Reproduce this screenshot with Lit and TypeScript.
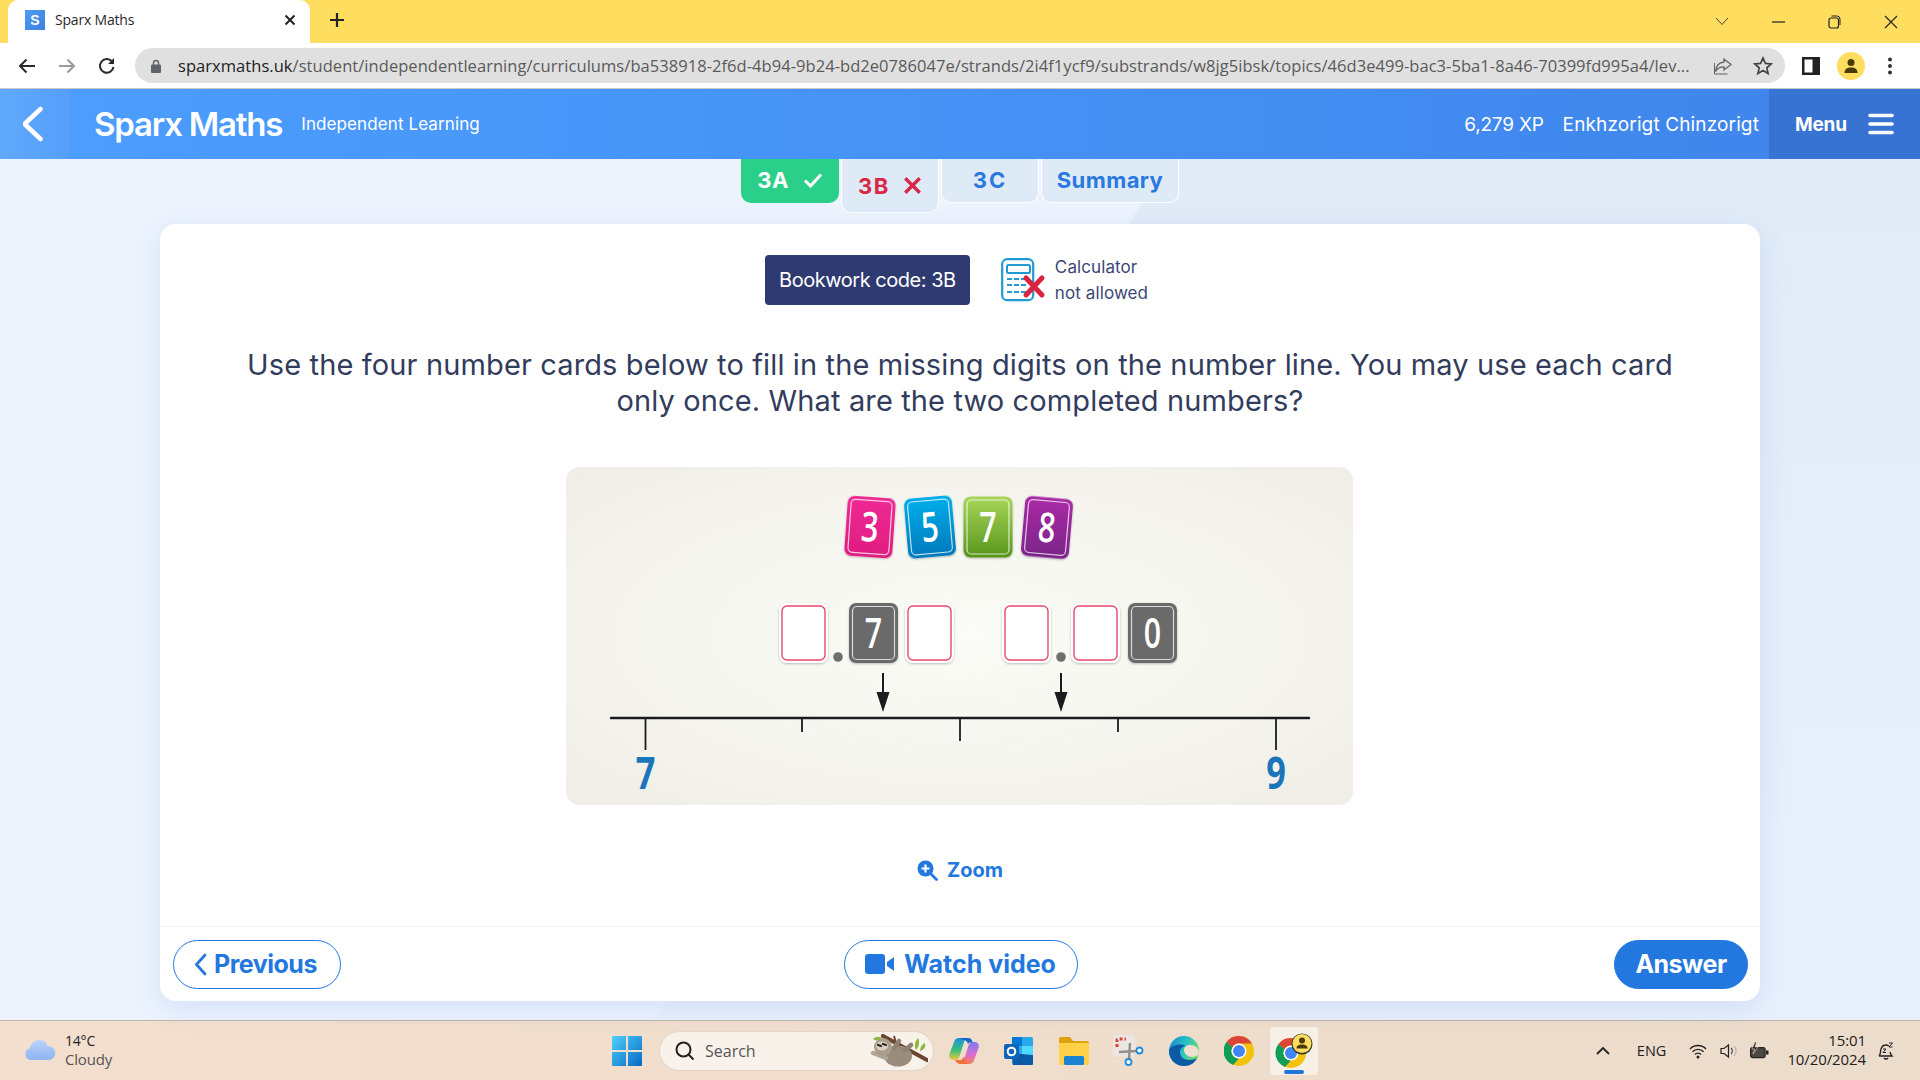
import { LitElement, html, css, svg } from "lit";
import { customElement } from "lit/decorators.js";

const URL_HOST = "sparxmaths.uk";
const URL_PATH = "/student/independentlearning/curriculums/ba538918-2f6d-4b94-9b24-bd2e0786047e/strands/2i4f1ycf9/substrands/w8jg5ibsk/topics/46d3e499-bac3-5ba1-8a46-70399fd995a4/lev...";

function card(cx: number, cy: number, w: number, h: number, rot: number, grad: string, digit: string) {
  const x = cx - w / 2, y = cy - h / 2;
  return svg`<g transform="rotate(${rot} ${cx} ${cy})">
    <rect x=${x} y=${y} width=${w} height=${h} rx="7" fill=${grad} filter="url(#sh)"/>
    <rect x=${x + 3.5} y=${y + 3.5} width=${w - 7} height=${h - 7} rx="4.5" fill="none" stroke="#fff" stroke-opacity=".75" stroke-width="1.2"/>
    <text transform="translate(${cx} ${cy + 14.5}) scale(.74 1)" text-anchor="middle" font-family="'Open Sans',sans-serif" font-weight="600" font-size="41" fill="#fff">${digit}</text>
  </g>`;
}
function blank(x: number) {
  return svg`<rect x=${x} y="603" width="49" height="60" rx="8" fill="#fff" filter="url(#sh)"/>
    <rect x=${x + 3} y="606" width="43" height="54" rx="5" fill="#fff" stroke="#e8486c" stroke-width="1.4"/>`;
}
function arrow(x: number) {
  return svg`<path d="M${x - 1} 673h2v19h5.5L${x} 712l-6.5-20H${x - 1}z" fill="#1c1c1e"/>`;
}
const chromeIcon = svg`<circle cx="15" cy="15" r="15" fill="#f4c20d"/><path d="M15 0a15 15 0 0 1 13 7.500H15a7.500 7.500 0 0 0-6.500 3.750L2.500 6A15 15 0 0 1 15 0z" fill="#db4437"/><path d="M2.500 6l6 5.250A7.500 7.500 0 0 0 15 22.500L9 29A15 15 0 0 1 2.500 6z" fill="#0f9d58"/><circle cx="15" cy="15" r="7.500" fill="#fff"/><circle cx="15" cy="15" r="6" fill="#4285f4"/>`;

@customElement("app-root")
export class AppRoot extends LitElement {
  static styles = css`
    :host { display: flex; flex-direction: column; width: 1920px; height: 1080px; overflow: hidden; font-family: "Noto Sans", sans-serif; background: #ecf3fd; }
    svg { display: block; flex: none; }
    button { font-family: inherit; }
    .tabstrip { height: 43px; background: #ffdd5e; display: flex; align-items: flex-end; padding-left: 8px; flex: none; }
    .ctab { width: 302px; height: 43px; background: #fff; border-radius: 10px 10px 0 0; display: flex; align-items: center; padding: 0 13px 4px 17px; box-sizing: border-box; gap: 10px; color: #2a2a2a; font-size: 14px; font-family: "Open Sans", sans-serif; }
    .favicon { width: 20px; height: 20px; background: linear-gradient(135deg,#4f9cf5,#3d7fe0); color: #fff; font: 700 14px "Liberation Sans", sans-serif; display: flex; align-items: center; justify-content: center; }
    .ctab span.t { flex: 1; letter-spacing: -.2px; }
    .plus { margin: 0 0 4px 19px; align-self: center; }
    .wincontrols { margin-left: auto; display: flex; align-items: center; align-self: center; padding-right: 22px; gap: 43px; }
    .toolbar { height: 45px; background: #fff; display: flex; align-items: center; flex: none; border-bottom: 1px solid #c9c9c9; box-sizing: content-box; }
    .nav { display: flex; align-items: center; gap: 20px; padding-left: 17px; width: 118px; box-sizing: border-box; }
    .omni { width: 1650px; height: 35px; background: #e0e0e0; border-radius: 18px; display: flex; align-items: center; box-sizing: border-box; padding: 0 12px 0 16px; margin-left: 17px; }
    .url { font-family: "Open Sans", sans-serif; font-size: 16.5px; letter-spacing: .05px; color: #5a5a5a; white-space: nowrap; margin-left: 17px; flex: 1; overflow: hidden; }
    .url b { font-weight: 400; color: #222; }
    .omni-icons { display: flex; align-items: center; gap: 20px; margin-left: 8px; }
    .tool-right { display: flex; align-items: center; margin-left: 17px; }
    .avatar { width: 28px; height: 28px; border-radius: 50%; background: #ffdd5e; margin: 0 22px 0 17px; display: flex; align-items: center; justify-content: center; }

    .sparx { height: 70px; flex: none; background: linear-gradient(90deg,#4c9eff,#3f84ea); color: #fff; display: flex; align-items: center; font-family: Inter, sans-serif; }
    .back { width: 70px; height: 70px; background: linear-gradient(90deg,#60a9fd,#559ffb); display: flex; align-items: center; justify-content: center; }
    .logo { margin-left: 24px; font: 600 33px Inter, sans-serif; letter-spacing: -1.2px; white-space: nowrap; }
    .sub { margin-left: 19px; font-size: 17px; letter-spacing: .1px; }
    .xp { margin-left: auto; font-size: 19px; letter-spacing: -.2px; }
    .name { margin-left: 19px; margin-right: 10px; font-size: 19px; letter-spacing: .13px; }
    .menu { width: 151px; height: 70px; background: #3673d3; display: flex; align-items: center; font-size: 19px; font-weight: 700; box-sizing: border-box; padding-left: 26px; gap: 21px; letter-spacing: -.2px; }

    main { flex: 1; position: relative; display: flex; flex-direction: column; align-items: center; min-height: 0; }
    main::before { content: ""; position: absolute; inset: 0; background: linear-gradient(180deg,#e1ebf7,#e8f0fc); clip-path: polygon(1168px 0, 100% 0, 100% 100%, 654px 100%); }
    .tabs { position: relative; height: 65px; display: flex; align-items: flex-start; gap: 2px; flex: none; font-family: Inter, sans-serif; font-weight: 700; font-size: 22px; }
    .tab { height: 44px; box-sizing: border-box; padding-bottom: 2px; background: #dfeaf7; border: 1px solid #fff; border-top: 0; border-radius: 0 0 10px 10px; color: #2a79e0; display: flex; align-items: center; justify-content: center; gap: 14px; letter-spacing: .4px; }
    .t3a { width: 98px; background: #2ad08a; border: 0; color: #fff; }
    .t3b { width: 98px; height: 54px; color: #d92845; padding-bottom: 0; letter-spacing: 1.6px; }
    .t3b svg { width: 19px; height: 19px; margin-left: -1px; }
    .t3c { width: 98px; letter-spacing: 2px; }
    .tsum { width: 138px; }

    .card { position: relative; width: 1600px; height: 777px; flex: none; background: #fff; border-radius: 16px; box-shadow: 0 8px 28px rgba(60,100,210,.12); display: flex; flex-direction: column; font-family: Inter, sans-serif; }
    .body { flex: 1; display: flex; flex-direction: column; align-items: center; padding-top: 31px; }
    .info { display: flex; align-items: center; height: 50px; padding-right: 7px; }
    .bookwork { width: 205px; height: 50px; border-radius: 4px; background: #2f3a70; color: #fff; font-size: 20px; letter-spacing: -.47px; display: flex; align-items: center; justify-content: center; margin-right: 31px; }
    .calc { font-size: 17px; line-height: 26px; color: #3c4775; margin-left: 9px; letter-spacing: .1px; }
    .q { margin: 42px 0 0; text-align: center; font-size: 29px; line-height: 36px; color: #323c5c; letter-spacing: .13px; white-space: nowrap; }
    .panel { width: 787px; height: 338px; margin: 48px 1px 0 0; border-radius: 14px; background: radial-gradient(ellipse at center,#fbfbf7 0%,#f6f6f0 50%,#efede5 100%); overflow: hidden; }
    .zoom { margin-top: 53px; display: flex; align-items: center; gap: 9px; color: #2278de; font-weight: 700; font-size: 20px; }
    .foot { height: 75px; flex: none; box-sizing: border-box; border-top: 1px solid #edf3fb; display: grid; grid-template-columns: 1fr auto 1fr; align-items: center; padding: 0 12px 0 13px; }
    .btn { height: 49px; box-sizing: border-box; border-radius: 25px; border: 1px solid #2278de; color: #2278de; background: #fff; display: flex; align-items: center; justify-content: center; gap: 10px; font-weight: 700; font-size: 25px; }
    .prev { width: 168px; gap: 7px; letter-spacing: -.5px; padding-left: 3px; }
    .watch { width: 234px; }
    .answer { width: 134px; background: #2278de; color: #fff; letter-spacing: -.5px; justify-self: end; }

    .taskbar { height: 60px; flex: none; box-sizing: border-box; border-top: 1px solid #bdb6ad; background: linear-gradient(90deg,#f4dfce,#ecdccb); display: flex; align-items: center; font-family: "Open Sans", sans-serif; color: #222; }
    .weather { width: 612px; flex: none; display: flex; align-items: center; box-sizing: border-box; padding-left: 24px; gap: 9px; font-size: 14px; line-height: 19px; letter-spacing: -.2px; padding-bottom: 1px; }
    .weather small { display: block; font-size: 15px; color: #555; }
    .center { display: flex; align-items: center; }
    .search { width: 273px; height: 38px; box-sizing: border-box; border-radius: 19px; background: #f8f2ea; box-shadow: 0 0 0 1px #e0d6ca; margin-left: 18px; display: flex; align-items: center; padding-left: 15px; gap: 10px; font-size: 16px; color: #555; }
    .search .sloth { margin-left: auto; margin-right: 5px; }
    .apps { display: flex; align-items: center; margin-left: 3px; }
    .app { width: 55px; height: 48px; display: flex; align-items: center; justify-content: center; position: relative; }
    .app.on { background: #f7f0e7; width: 48px; margin-left: 4px; border-radius: 4px; }
    .app.on::after { content: ""; position: absolute; left: 14px; right: 14px; bottom: 1px; height: 4px; border-radius: 2px; background: #1e78d8; }
    .tray { margin-left: auto; display: flex; align-items: center; font-size: 14.5px; }
    .tray .caret { margin-right: 27px; }
    .tray .lang { margin-right: 23px; }
    .tray .wifi { margin-right: 13px; }
    .tray .vol { margin-right: 11px; }
    .tray .bell { margin-right: 25px; }
    .clock { text-align: right; font-size: 15px; line-height: 19px; margin: 0 11px 0 18px; letter-spacing: -.1px; padding-bottom: 1px; }
  `;

  render() {
    return html`
      <div class="tabstrip">
        <div class="ctab">
          <div class="favicon">S</div>
          <span class="t">Sparx Maths</span>
          <svg width="14" height="14" viewBox="0 0 14 14"><path d="M2.5 2.5l9 9M11.5 2.5l-9 9" stroke="#222" stroke-width="2"/></svg>
        </div>
        <svg class="plus" width="16" height="16" viewBox="0 0 16 16"><path d="M8 1v14M1 8h14" stroke="#222" stroke-width="2.2"/></svg>
        <div class="wincontrols">
          <svg width="14" height="9" viewBox="0 0 14 9"><path d="M1 1l6 6.5L13 1" fill="none" stroke="#444" stroke-width="1"/></svg>
          <svg width="13" height="2" viewBox="0 0 13 2"><path d="M0 1h13" stroke="#222" stroke-width="1.2"/></svg>
          <svg width="13" height="14" viewBox="0 0 13 14"><rect x="1" y="3" width="9.5" height="10" rx="2" fill="none" stroke="#222" stroke-width="1.2"/><path d="M3.5 1h5.5a3 3 0 0 1 3 3v6" fill="none" stroke="#222" stroke-width="1"/></svg>
          <svg width="14" height="14" viewBox="0 0 14 14"><path d="M1 1l12 12M13 1L1 13" stroke="#222" stroke-width="1.1"/></svg>
        </div>
      </div>
      <div class="toolbar">
        <div class="nav">
          <svg width="20" height="20" viewBox="0 0 20 20"><path d="M18 10H3M9.5 3.5L3 10l6.500 6.500" fill="none" stroke="#2a2a2a" stroke-width="2"/></svg>
          <svg width="20" height="20" viewBox="0 0 20 20"><path d="M2 10h15M10.500 3.500L17 10l-6.500 6.500" fill="none" stroke="#9a9a9a" stroke-width="2"/></svg>
          <svg width="20" height="20" viewBox="0 0 20 20"><path d="M16.500 11a6.800 6.800 0 1 1-1.700-5.700" fill="none" stroke="#2a2a2a" stroke-width="2"/><path d="M17 2v6h-6z" fill="#2a2a2a"/></svg>
        </div>
        <div class="omni">
          <svg width="10" height="14" viewBox="0 0 10 14"><path d="M2.500 6V4a2.500 2.500 0 0 1 5 0v2" fill="none" stroke="#5f6368" stroke-width="1.500"/><rect y="5.500" width="10" height="8.500" rx="1" fill="#5f6368"/></svg>
          <div class="url"><b>${URL_HOST}</b>${URL_PATH}</div>
          <div class="omni-icons">
            <svg width="20" height="20" viewBox="0 0 20 20"><path d="M11 3l7 5.500-7 5.500v-3.200C6.500 10.800 4 12.500 2.500 15.500 3 10 6 6.500 11 6z" fill="none" stroke="#5f6368" stroke-width="1.300"/><path d="M1.500 7v11h13" fill="none" stroke="#5f6368" stroke-width="1"/></svg>
            <svg width="20" height="20" viewBox="0 0 20 20"><path d="M10 2l2.400 5.400 5.800.6-4.400 3.900 1.300 5.700L10 14.600l-5.100 3 1.300-5.700L1.800 8l5.800-.6z" fill="none" stroke="#444" stroke-width="1.700"/></svg>
          </div>
        </div>
        <div class="tool-right">
          <svg width="18" height="18" viewBox="0 0 18 18"><rect width="18" height="18" fill="#222"/><rect x="2.500" y="2.500" width="8" height="13" fill="#fff"/></svg>
          <div class="avatar"><svg width="16" height="16" viewBox="0 0 16 16"><circle cx="8" cy="4.500" r="3.500" fill="#4a3a06"/><path d="M1.500 15c0-4 2.500-5.500 6.500-5.500s6.500 1.500 6.500 5.500z" fill="#4a3a06"/></svg></div>
          <svg width="6" height="18" viewBox="0 0 6 18"><circle cx="3" cy="2.500" r="2" fill="#333"/><circle cx="3" cy="9" r="2" fill="#333"/><circle cx="3" cy="15.500" r="2" fill="#333"/></svg>
        </div>
      </div>

      <header class="sparx">
        <div class="back"><svg width="24" height="36" viewBox="0 0 24 36"><path d="M17.500 3L1.500 18l16 15" fill="none" stroke="#fff" stroke-width="4.500" stroke-linecap="round" stroke-linejoin="round"/></svg></div>
        <div class="logo">Sparx Maths</div>
        <div class="sub">Independent Learning</div>
        <div class="xp">6,279 XP</div>
        <div class="name">Enkhzorigt Chinzorigt</div>
        <div class="menu">Menu
          <svg width="26" height="22" viewBox="0 0 26 22"><path d="M2 2.500h22M2 11h22M2 19.500h22" stroke="#fff" stroke-width="3.600" stroke-linecap="round"/></svg>
        </div>
      </header>

      <main>
        <nav class="tabs">
          <div class="tab t3a">3A <svg width="20" height="16" viewBox="0 0 20 16"><path d="M2 8.500l5.500 5.500L18 2.500" fill="none" stroke="#fff" stroke-width="3"/></svg></div>
          <div class="tab t3b">3B <svg viewBox="0 0 17 17"><path d="M2 2l13 13M15 2L2 15" stroke="#d92845" stroke-width="3"/></svg></div>
          <div class="tab t3c">3C</div>
          <div class="tab tsum">Summary</div>
        </nav>
        <section class="card">
          <div class="body">
            <div class="info">
              <div class="bookwork">Bookwork code: 3B</div>
              <svg width="45" height="44" viewBox="0 0 45 44">
                <rect x="1.200" y="1.200" width="31" height="41" rx="5" fill="#fff" stroke="#1f9ad6" stroke-width="2.200"/>
                <rect x="6" y="7" width="23" height="8" rx="1.500" fill="none" stroke="#1f9ad6" stroke-width="2"/>
                <path d="M6 21h5M13 21h5M20 21h5M6 27h5M13 27h5M20 27h5M6 34h5M13 34h5M20 34h5" stroke="#1f9ad6" stroke-width="2.200"/>
                <path d="M25 20l16 17M41 20L25 37" stroke="#d9233f" stroke-width="5" stroke-linecap="round"/>
              </svg>
              <div class="calc">Calculator<br />not allowed</div>
            </div>
            <p class="q">Use the four number cards below to fill in the missing digits on the number line. You may use each card<br />only once. What are the two completed numbers?</p>
            <div class="panel">
              <svg width="787" height="338" viewBox="566 467 787 338">
                <defs>
                  <filter id="sh" x="-20%" y="-20%" width="140%" height="140%"><feDropShadow dx="0" dy="1" stdDeviation="1.200" flood-color="#000" flood-opacity=".25"/></filter>
                  <linearGradient id="gp" x1="0" y1="0" x2="0" y2="1"><stop offset="0" stop-color="#ef2a94"/><stop offset="1" stop-color="#df1c80"/></linearGradient>
                  <linearGradient id="gb" x1="0" y1="0" x2="0" y2="1"><stop offset="0" stop-color="#06aeea"/><stop offset="1" stop-color="#0079bd"/></linearGradient>
                  <linearGradient id="gg" x1="0" y1="0" x2="0" y2="1"><stop offset="0" stop-color="#a9d65a"/><stop offset="1" stop-color="#57951c"/></linearGradient>
                  <linearGradient id="gv" x1="0" y1="0" x2="0" y2="1"><stop offset="0" stop-color="#aa2aa6"/><stop offset="1" stop-color="#7a2488"/></linearGradient>
                </defs>
                ${card(870, 527, 48, 60, 4, "url(#gp)", "3")}
                ${card(930, 527, 48, 60, -5, "url(#gb)", "5")}
                ${card(988, 527, 49, 61, 0, "url(#gg)", "7")}
                ${card(1047, 527.500, 48, 60, 5, "url(#gv)", "8")}
                ${blank(779)}
                <circle cx="838" cy="657" r="4.800" fill="#6f6f6f"/>
                ${card(873.500, 633, 49, 60, 0, "#6b6b6b", "7")}
                ${blank(905)}
                ${blank(1002)}
                <circle cx="1061" cy="657" r="4.800" fill="#6f6f6f"/>
                ${blank(1071)}
                ${card(1152.500, 633, 49, 60, 0, "#6b6b6b", "0")}
                ${arrow(883)}
                ${arrow(1061)}
                <path d="M611 718h698" stroke="#1c1c1e" stroke-width="2.400" stroke-linecap="round"/>
                <path d="M645.500 718v32M960 718v23M1276 718v32" stroke="#1c1c1e" stroke-width="1.800"/>
                <path d="M802 718v14M1118 718v14" stroke="#1c1c1e" stroke-width="1.800"/>
                <text transform="translate(645.500 789) scale(.78 1)" text-anchor="middle" font-family="'Open Sans',sans-serif" font-weight="700" font-size="44" fill="#1b75bc">7</text>
                <text transform="translate(1276 789) scale(.78 1)" text-anchor="middle" font-family="'Open Sans',sans-serif" font-weight="700" font-size="44" fill="#1b75bc">9</text>
              </svg>
            </div>
            <div class="zoom">
              <svg width="21" height="21" viewBox="0 0 21 21"><circle cx="8.500" cy="8.500" r="8" fill="#2278de"/><path d="M8.500 4.500v8M4.500 8.500h8" stroke="#fff" stroke-width="2.200"/><path d="M14 14l5.500 5.500" stroke="#2278de" stroke-width="2.800" stroke-linecap="round"/></svg>
              Zoom
            </div>
          </div>
          <div class="foot">
            <button class="btn prev"><svg width="13" height="23" viewBox="0 0 13 23"><path d="M11 2L2.500 11.500 11 21" fill="none" stroke="#2278de" stroke-width="2.800" stroke-linecap="round"/></svg>Previous</button>
            <button class="btn watch"><svg width="29" height="20" viewBox="0 0 29 20"><rect width="20" height="20" rx="3" fill="#2278de"/><path d="M22 8l7-5v14l-7-5z" fill="#2278de"/></svg>Watch video</button>
            <button class="btn answer">Answer</button>
          </div>
        </section>
      </main>

      <footer class="taskbar">
        <div class="weather">
          <svg width="32" height="22" viewBox="0 0 32 22"><defs><linearGradient id="cl" x1="0" y1="0" x2="0" y2="1"><stop offset="0" stop-color="#b9d2fb"/><stop offset="1" stop-color="#8fb4f2"/></linearGradient></defs><path d="M7 21a6 6 0 0 1-1-11.800C7 4 11 1 15.500 1c4 0 7 2.300 8 6a7 7 0 0 1 1.500 14z" fill="url(#cl)"/></svg>
          <div>14°C<small>Cloudy</small></div>
        </div>
        <div class="center">
          <svg width="30" height="30" viewBox="0 0 30 30"><defs><linearGradient id="w" x1="0" y1="0" x2="1" y2="1"><stop offset="0" stop-color="#4fd0fb"/><stop offset="1" stop-color="#0669c6"/></linearGradient></defs><path d="M0 1a1 1 0 0 1 1-1h13v14H0zM16 0h13a1 1 0 0 1 1 1v13H16zM0 16h14v14H1a1 1 0 0 1-1-1zM16 16h14v13a1 1 0 0 1-1 1H16z" fill="url(#w)"/></svg>
          <div class="search">
            <svg width="20" height="20" viewBox="0 0 20 20"><circle cx="8.500" cy="8.500" r="7" fill="none" stroke="#222" stroke-width="2"/><path d="M13.500 13.500l5 5" stroke="#222" stroke-width="2"/></svg>
            Search
            <svg class="sloth" width="58" height="34" viewBox="0 0 58 34">
              <path d="M13 2l44 24" stroke="#6b4630" stroke-width="4.200" stroke-linecap="round"/>
              <path d="M26 9l-2-7" stroke="#6b4630" stroke-width="2"/>
              <path d="M3 5c3-3 7-3 9 0-3 2-6 2-9 0zM46 16c-2-4-1-9 2-12 2 4 1 9-2 12zM50 17c0-3 2-7 5-8 1 4-1 7-5 8z" fill="#8ab83a"/>
              <ellipse cx="28" cy="22" rx="14" ry="10.500" fill="#9a8c7c"/>
              <path d="M16 24l-13-5" stroke="#b0a493" stroke-width="4.500" stroke-linecap="round"/>
              <path d="M24 14l5-7M35 16l6 -5" stroke="#8f8172" stroke-width="4.500" stroke-linecap="round"/>
              <circle cx="13" cy="13" r="9" fill="#a99d8c"/>
              <ellipse cx="12" cy="12" rx="6" ry="4.500" fill="#d8d0c2"/>
              <path d="M8 11l3 1M13 10l3 1" stroke="#2e2620" stroke-width="2.200" stroke-linecap="round"/>
            </svg>
          </div>
          <div class="apps">
            <div class="app"><svg width="30" height="30" viewBox="0 0 30 30"><defs><linearGradient id="c1" x1="0" y1="0" x2="0" y2="1"><stop offset="0" stop-color="#1f8fe0"/><stop offset=".55" stop-color="#37c07a"/><stop offset="1" stop-color="#f2c63a"/></linearGradient><linearGradient id="c2" x1="0" y1="0" x2="0" y2="1"><stop offset="0" stop-color="#7f7af0"/><stop offset=".55" stop-color="#d96cd6"/><stop offset="1" stop-color="#f47f5a"/></linearGradient></defs><path d="M10 2h9c-2 0-3 1.500-4 4l-4 13c-.8 3-2 5-5 5H4c-3 0-4.500-3-3.500-6L5 6c.8-2.500 2.500-4 5-4z" fill="url(#c1)"/><path d="M20 28h-9c2 0 3-1.500 4-4l4-13c.8-3 2-5 5-5h2c3 0 4.500 3 3.500 6L25 24c-.8 2.500-2.500 4-5 4z" fill="url(#c2)"/><path d="M10 2h9c3 0 4.500 2 4.500 5-1.500-1-3-1-4.500 1-1-3-2-4-5-4-1.500-1-3-2-4-2z" fill="#1565d0"/><path d="M6 24h5c2 0 3-1.500 4-4 1 4 2 8 5 8h-9c-2 0-4-2-5-4z" fill="#f0703c"/></svg></div>
            <div class="app"><svg width="30" height="30" viewBox="0 0 30 30"><rect x="8" y="1" width="21" height="28" rx="2" fill="#28a8ea"/><rect x="8" y="1" width="10" height="9" fill="#0078d4"/><rect x="18" y="10" width="11" height="9" fill="#50d9ff"/><path d="M8 17l21 2v9a1 1 0 0 1-1 1H9z" fill="#0a5aa8"/><rect y="8" width="15" height="15" rx="2" fill="#0f65b8"/><circle cx="7.500" cy="15.500" r="3.800" fill="none" stroke="#fff" stroke-width="2"/></svg></div>
            <div class="app"><svg width="30" height="28" viewBox="0 0 30 28"><path d="M0 2a2 2 0 0 1 2-2h9l3 4h14a2 2 0 0 1 2 2v4H0z" fill="#dfa20f"/><path d="M0 6h30v20a2 2 0 0 1-2 2H2a2 2 0 0 1-2-2z" fill="#ffd04a"/><rect x="5" y="19" width="20" height="9" rx="1.500" fill="#1a83d4"/></svg></div>
            <div class="app"><svg width="31" height="31" viewBox="0 0 31 31"><rect width="22" height="22" rx="3" fill="#ebe6e2"/><path d="M4 12V5a1 1 0 0 1 1-1h8" fill="none" stroke="#d9443a" stroke-width="3" stroke-dasharray="3 2"/><path d="M17 8l-1 16M6 17l18-1" stroke="#8f8f8f" stroke-width="2.400"/><circle cx="26.500" cy="15.500" r="3" fill="#fff" stroke="#1e8ce0" stroke-width="1.800"/><circle cx="15.500" cy="27" r="3" fill="#fff" stroke="#1e8ce0" stroke-width="1.800"/></svg></div>
            <div class="app"><svg width="30" height="30" viewBox="0 0 30 30"><defs><linearGradient id="e1" x1="0" y1="0" x2="1" y2=".4"><stop offset="0" stop-color="#1186d8"/><stop offset=".6" stop-color="#2ec3c0"/><stop offset="1" stop-color="#6fdc6a"/></linearGradient></defs><circle cx="15" cy="15" r="15" fill="url(#e1)"/><path d="M0 15c0 8 6 15 15 15 6 0 11-3 13-8-2 1-5 2-8 2-6 0-9-4-9-8 0-3 2-5 5-6C13 7 0 9 0 15z" fill="#0c5aa6"/><path d="M30 18c0-6-4-9-9-9-3 0-6 2-6 5 0 4 4 7 8 7 3 0 5-1 7-3z" fill="#efe0d0"/></svg></div>
            <div class="app"><svg width="30" height="30" viewBox="0 0 30 30">${chromeIcon}</svg></div>
            <div class="app on"><svg width="38" height="36" viewBox="0 0 38 36"><g transform="translate(1 5)">${chromeIcon}</g><circle cx="27" cy="11" r="10.500" fill="#2e3a2a"/><circle cx="27" cy="10.500" r="9.500" fill="#ffdd5e"/><circle cx="27" cy="7.500" r="3" fill="#4a3a06"/><path d="M21.500 15.500c0-3 2-4 5.500-4s5.500 1 5.500 4z" fill="#4a3a06"/></svg></div>
          </div>
        </div>
        <div class="tray">
          <svg class="caret" width="14" height="9" viewBox="0 0 14 9"><path d="M1 8l6-6 6 6" fill="none" stroke="#222" stroke-width="1.800"/></svg>
          <span class="lang">ENG</span>
          <svg class="wifi" width="18" height="16" viewBox="0 0 18 16"><path d="M1 6a11 11 0 0 1 16 0M3.500 8.800a7.500 7.500 0 0 1 11 0M6 11.500a4 4 0 0 1 6 0" fill="none" stroke="#222" stroke-width="1.400"/><circle cx="9" cy="14" r="1.500" fill="#222"/></svg>
          <svg class="vol" width="18" height="16" viewBox="0 0 18 16"><path d="M1 5.500h3L8.500 2v12L4 10.500H1z" fill="none" stroke="#222" stroke-width="1.200"/><path d="M11 5a4 4 0 0 1 0 6" fill="none" stroke="#444" stroke-width="1.100"/><path d="M14 3a7 7 0 0 1 0 10" fill="none" stroke="#aaa" stroke-width="1"/></svg>
          <svg width="20" height="18" viewBox="0 0 20 18"><rect x="1.600" y="5.600" width="14.500" height="10" rx="2" fill="#4a4640" stroke="#222" stroke-width="1.200"/><rect x="17" y="8.500" width="2.500" height="4" fill="#222"/><path d="M6 0L3 7h3L4 12l5-7H6l1.500-5z" fill="#222" stroke="#eadccb" stroke-width=".6"/></svg>
          <div class="clock">15:01<br />10/20/2024</div>
          <svg class="bell" width="18" height="20" viewBox="0 0 18 20"><path d="M2 15c2-2 1-4 2-7s3-4 5-4c1 0 2 .5 3 1M2 15h13c-1-1-1.500-2-2-4M7 17a2.500 2.500 0 0 0 4 0" fill="none" stroke="#222" stroke-width="1.300"/><path d="M6 8h3l-3 3.500h3M12 2h3.500l-3.500 4h3.500" fill="none" stroke="#222" stroke-width="1"/></svg>
        </div>
      </footer>
    `;
  }
}
